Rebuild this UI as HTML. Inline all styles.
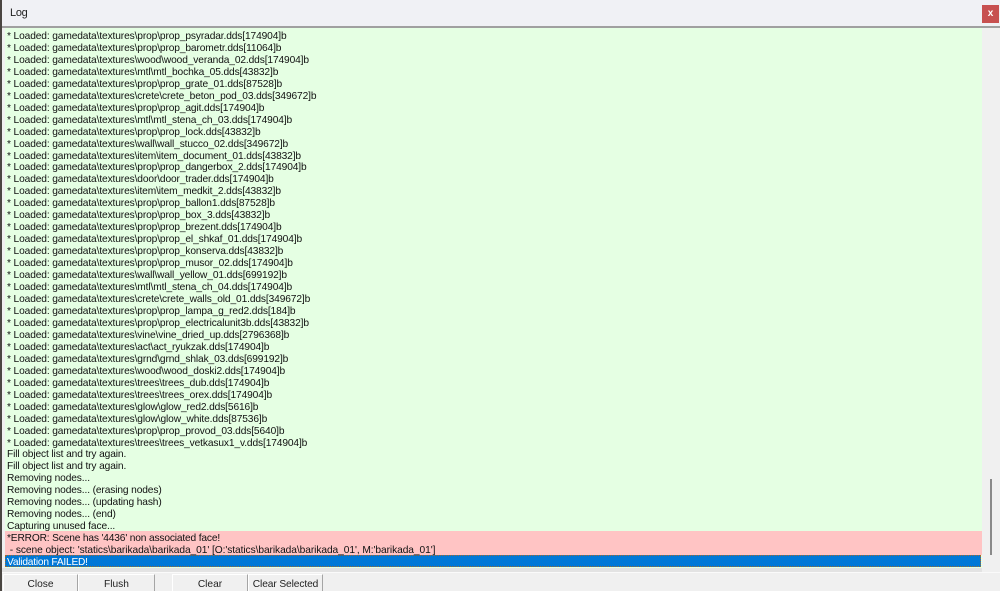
<!DOCTYPE html>
<html>
<head>
<meta charset="utf-8">
<style>
html,body{margin:0;padding:0;width:1000px;height:591px;overflow:hidden;background:#f0f0f0;}
body{position:relative;font-family:"Liberation Sans",sans-serif;color:#111;}
.abs{position:absolute;}
#title{left:2px;top:0;width:998px;height:26px;background:#f0f1f5;}
#titletext{left:10px;top:6px;font-size:11px;line-height:15px;color:#222;letter-spacing:-0.3px;}
#close{left:982px;top:5px;width:17px;height:18px;background:#c75050;color:#fff;font-size:10px;font-weight:bold;line-height:17px;text-align:center;}
#rule{left:2px;top:26px;width:998px;height:2px;background:#a0a0a0;}
#left{left:0;top:0;width:2px;height:591px;background:#4a4642;}
#list{left:5px;top:28px;width:977px;height:540px;background:#e5ffe3;overflow:hidden;}
#rows{position:absolute;left:0;top:2px;width:977px;filter:blur(0.25px);}
.r{position:absolute;left:0;height:12px;line-height:12px;font-size:10.2px;letter-spacing:-0.12px;white-space:pre;padding-left:2px;color:#111;}
.e{position:absolute;left:0;width:977px;top:503px;height:24px;background:#ffc4c4;}
.s{position:absolute;left:0;width:976px;top:527px;height:12px;background:#0078d7;outline:1px dotted #a06a30;outline-offset:-1px;}
.w{color:#fff;letter-spacing:-0.22px;}
#sb{left:982px;top:28px;width:18px;height:544px;background:#f0f0f0;}
#thumb{left:990px;top:479px;width:2px;height:76px;background:#8a8a8a;}
#band{left:2px;top:568px;width:980px;height:4px;background:#e3e3e3;}
#bar{left:2px;top:572px;width:998px;height:19px;background:#f0f0f0;border-top:1px solid #fafafa;box-sizing:border-box;}
.b{position:absolute;top:574px;height:17px;box-sizing:border-box;background:#f0f0f0;border-top:1px solid #fff;border-left:1px solid #fff;border-right:1px solid #a5a5a5;font-size:10.2px;line-height:19px;text-align:center;color:#222;}
</style>
</head>
<body>
<div class="abs" id="left"></div>
<div class="abs" id="title"></div>
<div class="abs" id="titletext">Log</div>
<div class="abs" id="close">x</div>
<div class="abs" id="rule"></div>
<div class="abs" id="list">
<div class="e"></div>
<div class="s"></div>
<div id="rows">
<div class="r" style="top:1px">* Loaded: gamedata\textures\prop\prop_psyradar.dds[174904]b</div>
<div class="r" style="top:13px">* Loaded: gamedata\textures\prop\prop_barometr.dds[11064]b</div>
<div class="r" style="top:25px">* Loaded: gamedata\textures\wood\wood_veranda_02.dds[174904]b</div>
<div class="r" style="top:37px">* Loaded: gamedata\textures\mtl\mtl_bochka_05.dds[43832]b</div>
<div class="r" style="top:49px">* Loaded: gamedata\textures\prop\prop_grate_01.dds[87528]b</div>
<div class="r" style="top:61px">* Loaded: gamedata\textures\crete\crete_beton_pod_03.dds[349672]b</div>
<div class="r" style="top:73px">* Loaded: gamedata\textures\prop\prop_agit.dds[174904]b</div>
<div class="r" style="top:85px">* Loaded: gamedata\textures\mtl\mtl_stena_ch_03.dds[174904]b</div>
<div class="r" style="top:97px">* Loaded: gamedata\textures\prop\prop_lock.dds[43832]b</div>
<div class="r" style="top:109px">* Loaded: gamedata\textures\wall\wall_stucco_02.dds[349672]b</div>
<div class="r" style="top:121px">* Loaded: gamedata\textures\item\item_document_01.dds[43832]b</div>
<div class="r" style="top:132px">* Loaded: gamedata\textures\prop\prop_dangerbox_2.dds[174904]b</div>
<div class="r" style="top:144px">* Loaded: gamedata\textures\door\door_trader.dds[174904]b</div>
<div class="r" style="top:156px">* Loaded: gamedata\textures\item\item_medkit_2.dds[43832]b</div>
<div class="r" style="top:168px">* Loaded: gamedata\textures\prop\prop_ballon1.dds[87528]b</div>
<div class="r" style="top:180px">* Loaded: gamedata\textures\prop\prop_box_3.dds[43832]b</div>
<div class="r" style="top:192px">* Loaded: gamedata\textures\prop\prop_brezent.dds[174904]b</div>
<div class="r" style="top:204px">* Loaded: gamedata\textures\prop\prop_el_shkaf_01.dds[174904]b</div>
<div class="r" style="top:216px">* Loaded: gamedata\textures\prop\prop_konserva.dds[43832]b</div>
<div class="r" style="top:228px">* Loaded: gamedata\textures\prop\prop_musor_02.dds[174904]b</div>
<div class="r" style="top:240px">* Loaded: gamedata\textures\wall\wall_yellow_01.dds[699192]b</div>
<div class="r" style="top:252px">* Loaded: gamedata\textures\mtl\mtl_stena_ch_04.dds[174904]b</div>
<div class="r" style="top:264px">* Loaded: gamedata\textures\crete\crete_walls_old_01.dds[349672]b</div>
<div class="r" style="top:276px">* Loaded: gamedata\textures\prop\prop_lampa_g_red2.dds[184]b</div>
<div class="r" style="top:288px">* Loaded: gamedata\textures\prop\prop_electricalunit3b.dds[43832]b</div>
<div class="r" style="top:300px">* Loaded: gamedata\textures\vine\vine_dried_up.dds[2796368]b</div>
<div class="r" style="top:312px">* Loaded: gamedata\textures\act\act_ryukzak.dds[174904]b</div>
<div class="r" style="top:324px">* Loaded: gamedata\textures\grnd\grnd_shlak_03.dds[699192]b</div>
<div class="r" style="top:336px">* Loaded: gamedata\textures\wood\wood_doski2.dds[174904]b</div>
<div class="r" style="top:348px">* Loaded: gamedata\textures\trees\trees_dub.dds[174904]b</div>
<div class="r" style="top:360px">* Loaded: gamedata\textures\trees\trees_orex.dds[174904]b</div>
<div class="r" style="top:372px">* Loaded: gamedata\textures\glow\glow_red2.dds[5616]b</div>
<div class="r" style="top:384px">* Loaded: gamedata\textures\glow\glow_white.dds[87536]b</div>
<div class="r" style="top:396px">* Loaded: gamedata\textures\prop\prop_provod_03.dds[5640]b</div>
<div class="r" style="top:408px">* Loaded: gamedata\textures\trees\trees_vetkasux1_v.dds[174904]b</div>
<div class="r" style="top:419px">Fill object list and try again.</div>
<div class="r" style="top:431px">Fill object list and try again.</div>
<div class="r" style="top:443px">Removing nodes...</div>
<div class="r" style="top:455px">Removing nodes... (erasing nodes)</div>
<div class="r" style="top:467px">Removing nodes... (updating hash)</div>
<div class="r" style="top:479px">Removing nodes... (end)</div>
<div class="r" style="top:491px">Capturing unused face...</div>
<div class="r" style="top:503px;letter-spacing:-0.16px">*ERROR: Scene has '4436' non associated face!</div>
<div class="r" style="top:515px;letter-spacing:-0.07px"> - scene object: 'statics\barikada\barikada_01' [O:'statics\barikada\barikada_01', M:'barikada_01']</div>
<div class="r w" style="top:527px">Validation FAILED!</div>
</div>
</div>
<div class="abs" id="sb"></div>
<div class="abs" id="thumb"></div>
<div class="abs" id="band"></div>
<div class="abs" id="bar"></div>
<div class="b" style="left:3px;width:75px;">Close</div>
<div class="b" style="left:78px;width:77px;">Flush</div>
<div class="b" style="left:172px;width:76px;">Clear</div>
<div class="b" style="left:248px;width:75px;letter-spacing:-0.1px;">Clear Selected</div>
</body>
</html>
